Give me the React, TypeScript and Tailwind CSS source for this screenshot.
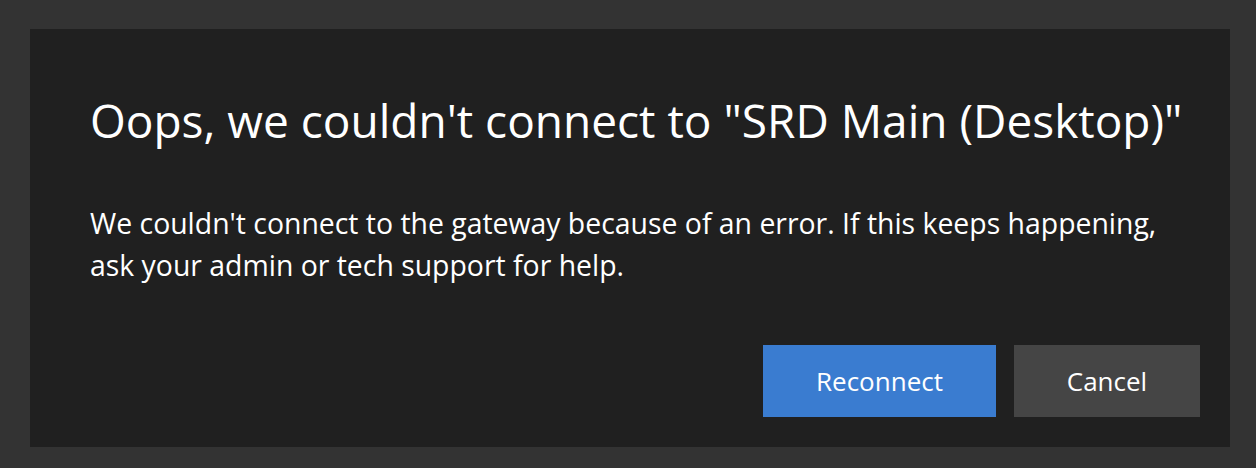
export default function App() {
  return (
    <div className="w-[1256px] h-[468px] bg-[#333333] pt-[29px] pl-[30px]" style={{ fontFamily: '"Open Sans", "Noto Sans", sans-serif' }}>
      <div className="w-[1200px] h-[418px] bg-[#202020] flex flex-col pl-[60px] pr-[30px] pb-[30px]">
        <h1 className="text-white text-[46px] leading-[56px] mt-[63px] whitespace-nowrap">Oops, we couldn't connect to "SRD Main (Desktop)"</h1>
        <p className="text-white text-[28.4px] leading-[42px] mt-[54px] whitespace-nowrap">
          We couldn't connect to the gateway because of an error. If this keeps happening,<br />ask your admin or tech support for help.
        </p>
        <div className="mt-auto flex justify-end gap-[18px]">
          <button className="w-[233px] h-[72px] bg-[#3a7cd0] text-white text-[26px] leading-[72px]">Reconnect</button>
          <button className="w-[186px] h-[72px] bg-[#454545] text-white text-[26px] leading-[72px]">Cancel</button>
        </div>
      </div>
    </div>
  );
}
